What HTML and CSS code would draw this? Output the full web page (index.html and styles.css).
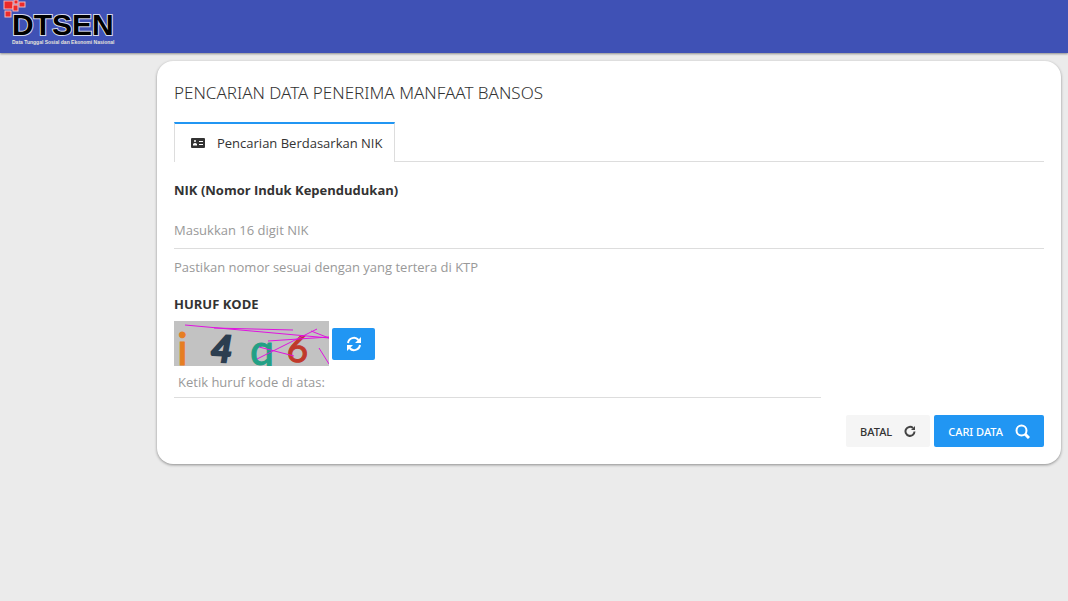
FILE: index.html
```html
<!DOCTYPE html>
<html lang="id">
<head>
  <meta charset="UTF-8">
  <meta name="viewport" content="width=device-width, initial-scale=1.0">
  <title>Pencarian Data Penerima Manfaat Bansos</title>
  <link rel="stylesheet" href="styles.css">
</head>
<body>
  <header class="navbar">
    <a href="#" class="brand" aria-label="DTSEN">
      <svg class="logo" width="116" height="48" viewBox="0 0 116 48">
        <g fill="#ee2a2a" stroke="#f3b9bd" stroke-width="1">
          <rect x="4" y="1" width="9" height="8"/>
          <rect x="14" y="0" width="4" height="4"/>
          <rect x="19" y="2" width="6" height="5"/>
          <rect x="13" y="5" width="5" height="6"/>
          <rect x="5" y="11" width="6" height="6"/>
        </g>
        <text class="logo-name" x="12" y="35">DTSEN</text>
        <text class="logo-sub" x="12" y="44">Data Tunggal Sosial dan Ekonomi Nasional</text>
      </svg>
    </a>
  </header>

  <main class="page">
    <section class="card">
      <h1>PENCARIAN DATA PENERIMA MANFAAT BANSOS</h1>

      <nav class="tabs">
        <a href="#nik" class="tab">
          <svg width="14" height="10" viewBox="0 0 14 10">
            <rect width="14" height="10" rx="1" fill="#333"/>
            <circle cx="4" cy="3" r="1" fill="#fff"/>
            <path d="M2 7.500V6q2-2 4 0v1.500z" fill="#fff"/>
            <path d="M8 3.500h4M8 6.500h4" stroke="#fff"/>
          </svg>
          Pencarian Berdasarkan NIK
        </a>
      </nav>

      <form id="nik">
        <label for="nikInput">NIK (Nomor Induk Kependudukan)</label>
        <input type="text" id="nikInput" class="line-input" maxlength="16" placeholder="Masukkan 16 digit NIK">
        <p class="help">Pastikan nomor sesuai dengan yang tertera di KTP</p>

        <label for="kodeInput">HURUF KODE</label>
        <div class="captcha-row">
          <svg class="captcha" width="155" height="45" viewBox="0 0 155 45" role="img" aria-label="Huruf kode">
            <rect width="155" height="45" fill="#c2c2c2"/>
            <text x="3" y="44" font-size="45" fill="#e67e22" stroke="#e67e22">i</text>
            <text x="37" y="41" font-size="37" font-weight="700" font-style="italic" fill="#2c3e50" stroke="#2c3e50" stroke-width="2" transform="rotate(3 46 28)">4</text>
            <text x="76" y="44" font-size="43" fill="#23a085" stroke="#23a085">q</text>
            <text x="113" y="41" font-size="37" fill="#c0392b" stroke="#c0392b" transform="rotate(5 123 28)">6</text>
            <path d="M11 4L155 17M40 7L119 9M94 20L155 16M83 38L143 8M137 10L155 17M85 26L120 35M145 27L155 43" fill="none" stroke="#e012e0"/>
          </svg>
          <button type="button" class="btn btn-primary btn-icon" aria-label="Muat ulang kode">
            <svg width="16" height="16" viewBox="0 0 16 16" fill="none" stroke="#fff" stroke-width="2">
              <path d="M2 7a6 6 0 0 1 10.500-3M14 9a6 6 0 0 1-10.500 3"/>
              <path d="M15 1v6H9zM1 15V9h6z" fill="#fff" stroke="none"/>
            </svg>
          </button>
        </div>
        <input type="text" id="kodeInput" class="line-input kode-input" placeholder="Ketik huruf kode di atas:">

        <div class="actions">
          <button type="reset" class="btn btn-default">
            BATAL
            <svg width="12" height="12" viewBox="0 0 12 12">
              <path d="M9 3A4.500 4.500 0 1 0 10.500 6.500" fill="none" stroke="#444" stroke-width="2"/>
              <path d="M11 1v4H7z" fill="#444"/>
            </svg>
          </button>
          <button type="submit" class="btn btn-primary">
            CARI DATA
            <svg width="15" height="15" viewBox="0 0 15 15" fill="none" stroke="#fff" stroke-width="2">
              <circle cx="6.500" cy="6.500" r="5"/>
              <path d="M10 10l4 4" stroke-width="3"/>
            </svg>
          </button>
        </div>
      </form>
    </section>
  </main>
</body>
</html>
```

FILE: styles.css
```css
* {
  box-sizing: border-box;
}

body {
  margin: 0;
  min-height: 100vh;
  background: #ebebeb;
  color: #333;
  font-family: "Open Sans", "Noto Sans", sans-serif;
  font-size: 13px;
  line-height: 20px;
}

.navbar {
  height: 53px;
  background: #3f51b5;
  box-shadow: 0 1px 2px rgba(0, 0, 0, 0.4);
}

.brand,
.logo {
  display: block;
}

.brand {
  width: 116px;
}

.logo-name {
  font: bold 30px "Liberation Sans", sans-serif;
  fill: #000;
  stroke: #d5d8ee;
  stroke-width: 2px;
  paint-order: stroke;
}

.logo-sub {
  font: bold 5px "Liberation Sans", sans-serif;
  fill: #e6e3dc;
}

.page {
  padding: 8px 7px 8px 157px;
}

.card {
  padding: 20px 17px 17px;
  background: #fff;
  border-radius: 16px;
  box-shadow: 0 1px 3px rgba(0, 0, 0, 0.4);
}

h1 {
  margin: 0 0 17px;
  font-family: "Noto Sans", sans-serif;
  font-size: 17px;
  font-weight: 300;
  line-height: 24px;
}

.tabs {
  display: flex;
  margin-bottom: 18px;
  border-bottom: 1px solid #ddd;
}

.tab {
  display: flex;
  align-items: center;
  gap: 12px;
  height: 40px;
  margin-bottom: -1px;
  padding: 0 12px 0 16px;
  border: 1px solid #ddd;
  border-top: 2px solid #2196f3;
  border-bottom: 0;
  background: #fff;
  color: #333;
  text-decoration: none;
}

label {
  display: block;
  font-weight: 700;
}

.line-input {
  display: block;
  width: 100%;
  height: 37px;
  margin-top: 12px;
  padding: 0;
  border: 0;
  border-bottom: 1px solid #ddd;
  background: transparent;
  color: #333;
  font: inherit;
  outline: 0;
}

.line-input::placeholder {
  color: #999;
  opacity: 1;
}

.line-input:focus {
  border-bottom-color: #2196f3;
}

.help {
  margin: 8px 0 17px;
  color: #999;
}

.captcha-row {
  display: flex;
  align-items: center;
  gap: 3px;
  margin-top: 7px;
}

.captcha {
  font-family: Lato, sans-serif;
}

.kode-input {
  width: 74.4%;
  height: 32px;
  margin-top: 0;
  padding: 0 4px;
}

.actions {
  display: flex;
  justify-content: flex-end;
  gap: 4px;
  margin-top: 17px;
}

.btn {
  display: flex;
  align-items: center;
  justify-content: center;
  gap: 12px;
  height: 32px;
  padding: 0 14px;
  border: 0;
  border-radius: 2px;
  font-family: "Noto Sans", sans-serif;
  font-size: 11px;
  font-weight: 500;
  cursor: pointer;
}

.btn-default {
  background: #f5f5f5;
  color: #333;
}

.btn-primary {
  background: #2196f3;
  color: #fff;
}

.btn-icon {
  width: 43px;
  padding: 0;
}
```
